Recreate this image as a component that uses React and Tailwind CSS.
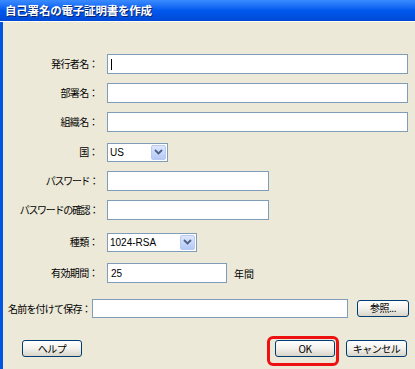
import React from 'react';

const jp = { fontFamily: '"Noto Sans CJK JP", "Liberation Sans", sans-serif' };
const lat = { fontFamily: '"Liberation Sans", "Noto Sans CJK JP", sans-serif' };

const Label = ({ children, tight }) => (
  <div
    className={`w-[95px] shrink-0 whitespace-nowrap text-right text-[10px] text-black leading-none ${tight ? 'tracking-[-1.3px]' : 'tracking-[-0.6px]'}`}
    style={jp}
  >
    {children}
  </div>
);

const TextBox = ({ width, value, caret }) => (
  <div
    className={`h-[20px] shrink-0 border border-[#7F9DB9] bg-white flex items-center pl-[3px] text-[10px] text-black ${width}`}
    style={lat}
  >
    {caret && <span className="w-px h-[11px] bg-black" />}
    {value}
  </div>
);

const Select = ({ width, value }) => (
  <div className={`h-[19px] shrink-0 border border-[#7F9DB9] bg-white flex items-center justify-between pl-[2px] pr-[1px] ${width}`}>
    <span className="text-[10px] text-black" style={lat}>{value}</span>
    <span className="w-[15px] h-[15px] rounded-[2px] bg-gradient-to-b from-[#DCE7FD] to-[#B4C9F6] border border-[#B9CBF3] flex items-center justify-center">
      <svg width="9" height="6" viewBox="0 0 9 6">
        <path d="M1 1 L4.5 4.5 L8 1" fill="none" stroke="#4D6185" strokeWidth="1.8" />
      </svg>
    </span>
  </div>
);

const XpButton = ({ children, width }) => (
  <div
    className={`h-[17px] ${width} rounded-[3px] border border-[#003C74] bg-gradient-to-b from-white via-[#F2F1EC] to-[#D9D5C8] flex items-center justify-center text-[10px] leading-none text-black tracking-[-0.5px] whitespace-nowrap`}
    style={jp}
  >
    {children}
  </div>
);

const Row = ({ label, tight, children, mt }) => (
  <div className={`h-[20px] flex items-center gap-[9px] ${mt}`}>
    <Label tight={tight}>{label}</Label>
    {children}
  </div>
);

export default function App() {
  return (
    <div className="w-[415px] h-[369px] overflow-hidden bg-[#ECE9D8] flex flex-col">
      {/* title bar */}
      <div className="h-[22px] shrink-0 bg-gradient-to-b from-[#3A8BFF] via-[#0058EE] to-[#0049D6] flex items-center pl-[5px] border-b border-[#FFFDF0]">
        <span className="text-white font-bold text-[11.5px] tracking-[-0.2px]" style={{ ...jp, textShadow: '1px 1px 0 #0A246A' }}>
          自己署名の電子証明書を作成
        </span>
      </div>

      <div className="flex-1 border-l-[3px] border-[#0055E5] pt-[32px] flex flex-col">
        <Row label="発行者名：">
          <TextBox width="w-[301px]" caret />
        </Row>
        <Row label="部署名：" mt="mt-[9px]">
          <TextBox width="w-[301px]" />
        </Row>
        <Row label="組織名：" mt="mt-[9px]">
          <TextBox width="w-[301px]" />
        </Row>
        <Row label="国：" mt="mt-[10px]">
          <Select width="w-[61px]" value="US" />
        </Row>
        <Row label="パスワード：" tight mt="mt-[9px]">
          <TextBox width="w-[162px]" />
        </Row>
        <Row label="パスワードの確認：" tight mt="mt-[9px]">
          <TextBox width="w-[162px]" />
        </Row>
        <Row label="種類：" mt="mt-[12px]">
          <Select width="w-[90px]" value="1024-RSA" />
        </Row>
        <Row label="有効期間：" mt="mt-[11px]">
          <TextBox width="w-[120px]" value="25" />
          <span className="text-[10px] text-black -ml-[2px]" style={jp}>年間</span>
        </Row>

        <div className="h-[20px] flex items-center mt-[15px] pl-[5px]">
          <span className="w-[84px] shrink-0 whitespace-nowrap text-[10px] tracking-[-0.8px] text-black" style={jp}>名前を付けて保存：</span>
          <div className="h-[19px] w-[256px] shrink-0 border border-[#7F9DB9] bg-white" />
          <div className="ml-[9px]">
            <XpButton width="w-[52px]">参照...</XpButton>
          </div>
        </div>

        <div className="flex items-center mt-[22px] pl-[19px]">
          <XpButton width="w-[60px]">ヘルプ</XpButton>
          <div className="relative ml-[193px]">
            <XpButton width="w-[60px]">OK</XpButton>
            <span className="absolute -left-[8px] -top-[4px] w-[72px] h-[30px] rounded-[6px] border-[3px] border-[#EE1111] pointer-events-none" />
          </div>
          <div className="ml-[11px]">
            <XpButton width="w-[61px]">キャンセル</XpButton>
          </div>
        </div>
      </div>
    </div>
  );
}
